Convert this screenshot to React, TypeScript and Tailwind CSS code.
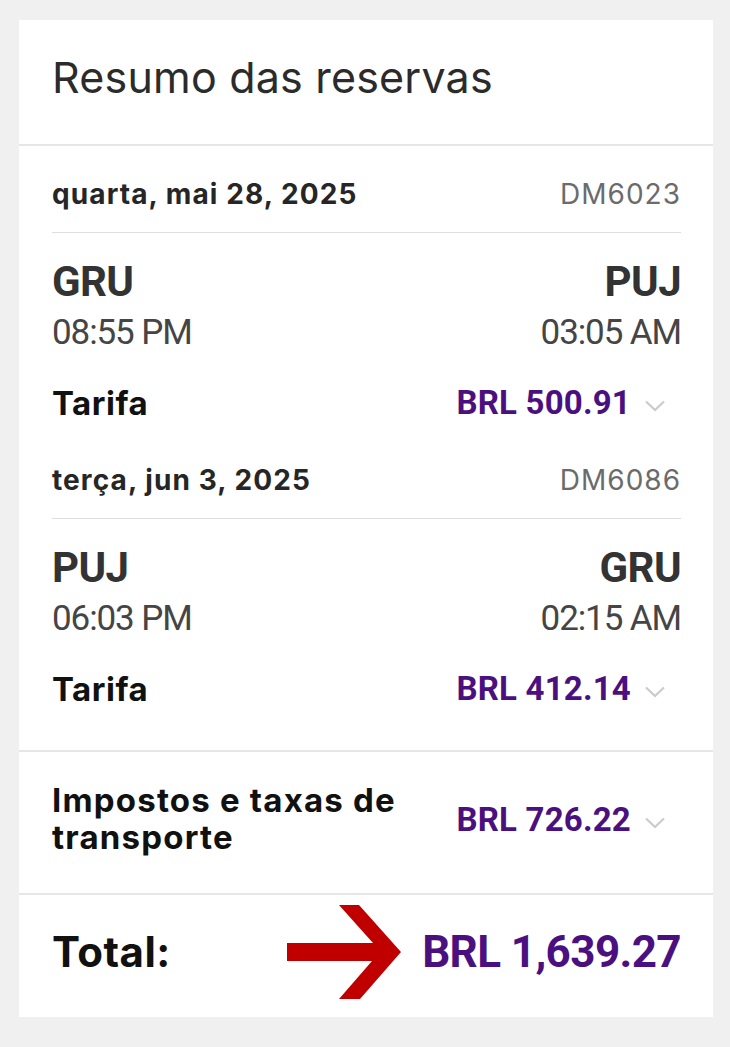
import React from "react";

type Segment = {
    date: string
    flight: string
    from: string
    to: string
    departs: string
    arrives: string
    fare: string
}

const segments: Segment[] = [
    {date: 'quarta, mai 28, 2025', flight: 'DM6023', from: 'GRU', to: 'PUJ', departs: '08:55 PM', arrives: '03:05 AM', fare: 'BRL 500.91'},
    {date: 'terça, jun 3, 2025', flight: 'DM6086', from: 'PUJ', to: 'GRU', departs: '06:03 PM', arrives: '02:15 AM', fare: 'BRL 412.14'},
]

const inter = {fontFamily: 'Inter, "Liberation Sans", sans-serif'}

function Chevron() {
    return (
        <span className="ml-[12px] mr-[14px] mt-[15px] flex h-[12px] w-[24px] items-center justify-center">
            <svg width="22" height="12" viewBox="0 0 22 12" fill="none">
                <path d="M2 1.5 L11 10 L20 1.5" stroke="#cbcbcb" strokeWidth="2.2"/>
            </svg>
        </span>
    )
}

function Price(props: {value: string}) {
    return (
        <div className="flex items-start">
            <span className="text-[33px] leading-[36px] font-bold text-[#4b1080] tracking-[0.2px]">{props.value}</span>
            <Chevron/>
        </div>
    )
}

function FlightSegment(props: {segment: Segment}) {
    const s = props.segment
    return (
        <div className="pb-[11px]">
            <div className="flex h-[87px] items-start justify-between border-b border-[#dedede] pt-[32px]">
                <span style={inter} className="text-[28px] leading-[32px] font-bold text-[#262626] tracking-[1.1px]">{s.date}</span>
                <span style={inter} className="text-[28px] leading-[32px] text-[#6b6b6b] tracking-[1px]">{s.flight}</span>
            </div>
            <div className="mt-[27px] flex h-[44px] justify-between text-[42px] leading-[44px] font-bold text-[#333333] tracking-[-0.6px]">
                <span>{s.from}</span>
                <span>{s.to}</span>
            </div>
            <div className="mt-[9px] flex h-[40px] justify-between text-[35px] leading-[40px] text-[#454545] tracking-[-1.1px]">
                <span>{s.departs}</span>
                <span>{s.arrives}</span>
            </div>
            <div className="mt-[32px] flex h-[36px] justify-between">
                <span style={inter} className="text-[33px] leading-[36px] font-bold text-[#111111] tracking-[0.5px]">Tarifa</span>
                <Price value={s.fare}/>
            </div>
        </div>
    )
}

function RedArrow() {
    return (
        <svg width="115" height="94" viewBox="0 0 115 94" className="mr-[20px] shrink-0">
            <polygon
                points="0,38 86,38 52,0 72,0 114,47 73,94 52,94 85,56 0,56"
                fill="#c00000"
            />
        </svg>
    )
}

export default function App() {
    return (
        <div className="min-h-screen bg-[#f0f0f0] pt-[20px] pb-[30px]" style={{fontFamily: 'Roboto, "Liberation Sans", sans-serif'}}>
            <div className="ml-[19px] w-[694px] bg-white">
                <div className="h-[126px] border-b-2 border-[#e6e6e6] px-[33px] pt-[33px]">
                    <h1 style={inter} className="text-[43px] leading-[48px] font-normal text-[#2b2b2b] tracking-[0.2px]">Resumo das reservas</h1>
                </div>

                <div className="border-b-2 border-[#e6e6e6] pl-[33px] pr-[32px] pb-[32px]">
                    {segments.map(s => <FlightSegment key={s.flight} segment={s}/>)}
                </div>

                <div className="flex items-center justify-between border-b-2 border-[#e6e6e6] pl-[33px] pr-[32px] pt-[30px] pb-[37px]">
                    <span style={inter} className="text-[33px] leading-[37px] font-bold text-[#111111] tracking-[1.2px]">
                        Impostos e taxas de<br/>transporte
                    </span>
                    <div className="pt-[2px]">
                        <Price value="BRL 726.22"/>
                    </div>
                </div>

                <div className="flex h-[122px] items-center justify-between pl-[33px] pr-[32px] pb-[8px]">
                    <span style={inter} className="text-[42px] leading-[50px] font-bold text-[#111111] tracking-[0.5px]">Total:</span>
                    <div className="flex items-center">
                        <RedArrow/>
                        <span className="text-[44px] leading-[50px] font-bold text-[#4b1080] tracking-[-0.6px]">BRL 1,639.27</span>
                    </div>
                </div>
            </div>
        </div>
    )
}
